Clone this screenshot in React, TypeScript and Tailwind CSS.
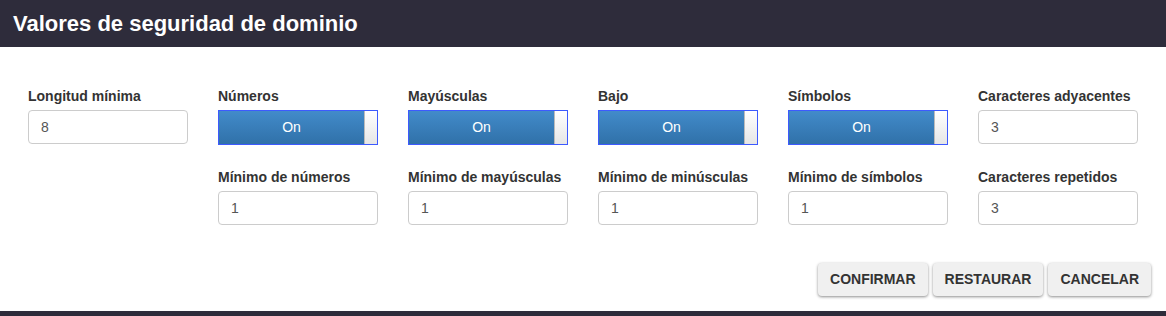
import { useState } from "react";

type Field = { label: string; value: string };

const Input = ({ label, value }: Field) => (
    <div className="flex flex-col">
        <label className="text-[14px] font-bold leading-[18px] text-[#333] mb-[5px]">{label}</label>
        <input
            type="text"
            defaultValue={value}
            className="h-[34px] w-[160px] rounded-[4px] border border-[#ccc] bg-white px-[12px] text-[14px] text-[#555] outline-none"
        />
    </div>
);

const Toggle = ({ label }: { label: string }) => {
    const [on, setOn] = useState(true);
    return (
        <div className="flex flex-col">
            <label className="text-[14px] font-bold leading-[18px] text-[#333] mb-[5px]">{label}</label>
            <button
                onClick={() => setOn(!on)}
                className="flex h-[35px] w-[160px] border border-[#3d5afe] bg-gradient-to-b from-[#428bca] to-[#3071a9]"
            >
                <span className="flex flex-1 items-center justify-center text-[14px] text-white">{on ? "On" : "Off"}</span>
                <span className="w-[13px] h-full border-l border-[#bbb] bg-gradient-to-b from-white to-[#e6e6e6]" />
            </button>
        </div>
    );
};

const Button = ({ children }: { children: string }) => (
    <button className="h-[33px] rounded-[4px] bg-[#f0f0f0] px-[12px] text-[14px] font-bold text-[#333] shadow-[0_1px_3px_rgba(0,0,0,0.45)]">
        {children}
    </button>
);

export default function App() {
    return (
        <div className="w-[1166px] h-[316px] bg-white flex flex-col" style={{ fontFamily: '"Liberation Sans", Arial, sans-serif' }}>
            <div className="h-[47px] bg-[#2e2c3b] flex items-center px-[13px]">
                <h2 className="text-[22px] font-bold text-white">Valores de seguridad de dominio</h2>
            </div>

            <div className="flex-1 flex flex-col">
                <div className="grid grid-cols-[repeat(6,160px)] gap-x-[30px] gap-y-[23px] px-[28px] pt-[40px]">
                    <Input label="Longitud mínima" value="8" />
                    <Toggle label="Números" />
                    <Toggle label="Mayúsculas" />
                    <Toggle label="Bajo" />
                    <Toggle label="Símbolos" />
                    <Input label="Caracteres adyacentes" value="3" />

                    <div />
                    <Input label="Mínimo de números" value="1" />
                    <Input label="Mínimo de mayúsculas" value="1" />
                    <Input label="Mínimo de minúsculas" value="1" />
                    <Input label="Mínimo de símbolos" value="1" />
                    <Input label="Caracteres repetidos" value="3" />
                </div>

                <div className="flex justify-end gap-[5px] pr-[15px] mt-auto mb-[15px]">
                    <Button>CONFIRMAR</Button>
                    <Button>RESTAURAR</Button>
                    <Button>CANCELAR</Button>
                </div>
            </div>

            <div className="h-[5px] bg-[#2e2c3b]" />
        </div>
    );
}
